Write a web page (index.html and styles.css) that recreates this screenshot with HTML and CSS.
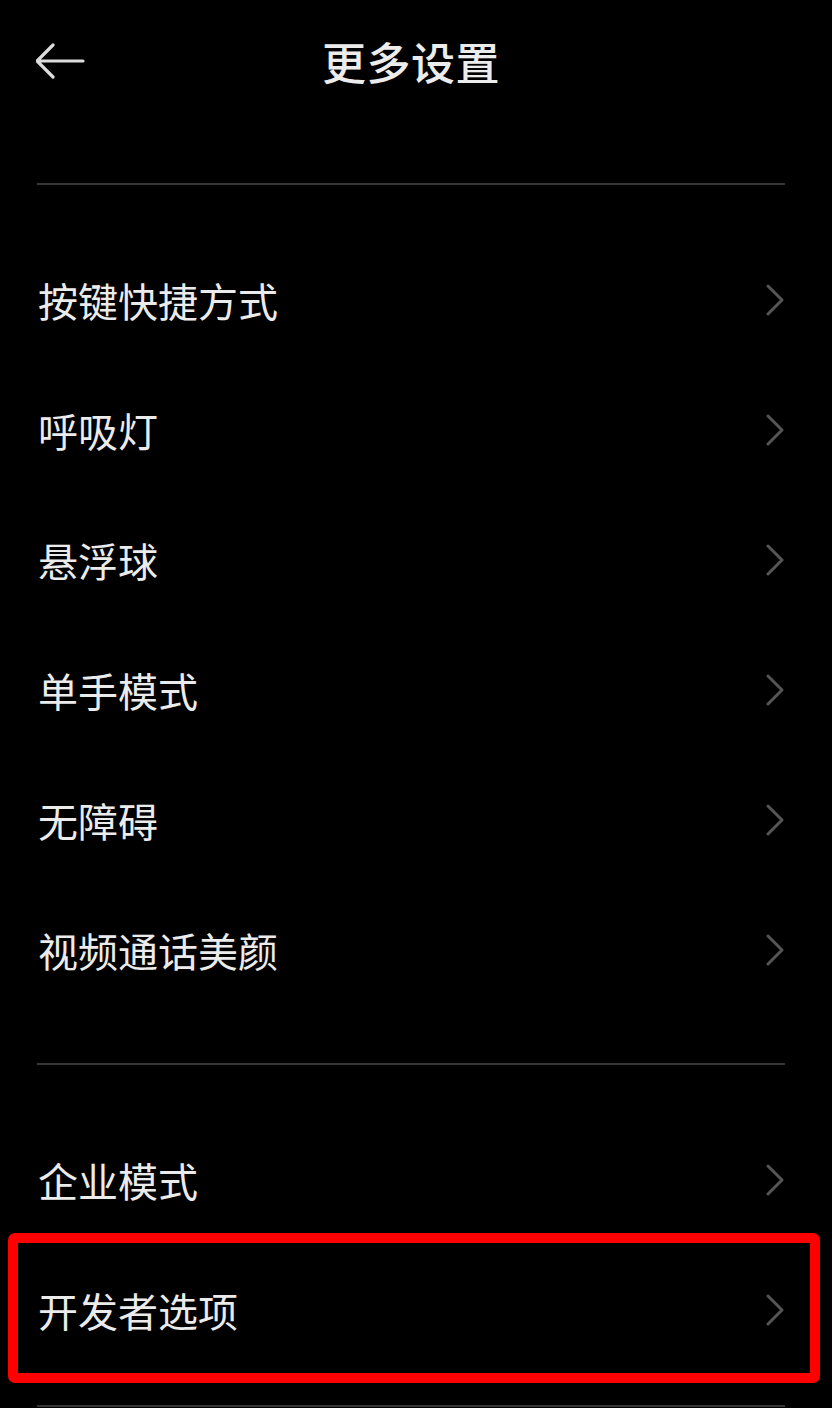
FILE: index.html
```html
<!DOCTYPE html>
<html lang="zh-CN">
<head>
<meta charset="utf-8">
<title>更多设置</title>
<link rel="stylesheet" href="styles.css">
</head>
<body>
<div class="page">
  <header class="header">
    <div class="back">
      <svg width="50" height="36" viewBox="0 0 50 36">
        <path d="M17 2 L1 18 L17 34 M1 18 H47" fill="none" stroke="#dcdcdc" stroke-width="3.2" stroke-linecap="round" stroke-linejoin="round"/>
      </svg>
    </div>
    <h1 class="title">更多设置</h1>
    <div class="spacer"></div>
  </header>
  <div class="divider"></div>
  <ul class="list">
    <li class="row"><span>按键快捷方式</span><svg class="chev" width="20" height="32" viewBox="0 0 20 32"><path d="M2 2 L16 16 L2 30" fill="none" stroke="#555" stroke-width="3" stroke-linecap="round" stroke-linejoin="round"/></svg></li>
    <li class="row"><span>呼吸灯</span><svg class="chev" width="20" height="32" viewBox="0 0 20 32"><path d="M2 2 L16 16 L2 30" fill="none" stroke="#555" stroke-width="3" stroke-linecap="round" stroke-linejoin="round"/></svg></li>
    <li class="row"><span>悬浮球</span><svg class="chev" width="20" height="32" viewBox="0 0 20 32"><path d="M2 2 L16 16 L2 30" fill="none" stroke="#555" stroke-width="3" stroke-linecap="round" stroke-linejoin="round"/></svg></li>
    <li class="row"><span>单手模式</span><svg class="chev" width="20" height="32" viewBox="0 0 20 32"><path d="M2 2 L16 16 L2 30" fill="none" stroke="#555" stroke-width="3" stroke-linecap="round" stroke-linejoin="round"/></svg></li>
    <li class="row"><span>无障碍</span><svg class="chev" width="20" height="32" viewBox="0 0 20 32"><path d="M2 2 L16 16 L2 30" fill="none" stroke="#555" stroke-width="3" stroke-linecap="round" stroke-linejoin="round"/></svg></li>
    <li class="row"><span>视频通话美颜</span><svg class="chev" width="20" height="32" viewBox="0 0 20 32"><path d="M2 2 L16 16 L2 30" fill="none" stroke="#555" stroke-width="3" stroke-linecap="round" stroke-linejoin="round"/></svg></li>
  </ul>
  <div class="divider"></div>
  <ul class="list last">
    <li class="row"><span>企业模式</span><svg class="chev" width="20" height="32" viewBox="0 0 20 32"><path d="M2 2 L16 16 L2 30" fill="none" stroke="#555" stroke-width="3" stroke-linecap="round" stroke-linejoin="round"/></svg></li>
    <li class="row highlighted"><span>开发者选项</span><svg class="chev" width="20" height="32" viewBox="0 0 20 32"><path d="M2 2 L16 16 L2 30" fill="none" stroke="#555" stroke-width="3" stroke-linecap="round" stroke-linejoin="round"/></svg></li>
  </ul>
  <div class="divider"></div>
</div>
</body>
</html>
```

FILE: styles.css
```css
html, body {
  margin: 0;
  padding: 0;
  background: #000;
}
body {
  font-family: "Noto Sans CJK SC", "Noto Sans", sans-serif;
  color: #ebebeb;
}
.page {
  width: 832px;
  height: 1408px;
  overflow: hidden;
  background: #000;
}
.header {
  height: 122px;
  display: grid;
  grid-template-columns: 1fr auto 1fr;
  align-items: center;
  padding: 0 37px;
}
.back {
  display: flex;
  align-items: center;
  height: 36px;
}
.back svg {
  display: block;
  margin-left: -1px;
}
.title {
  margin: 0 0 0 -10px;
  font-size: 44px;
  font-weight: 500;
  line-height: 1;
  color: #ececec;
  letter-spacing: 0.5px;
}
.divider {
  height: 2px;
  margin: 0 47px 0 37px;
  background: #363636;
}
.header + .divider {
  margin-top: 61px;
}
.list {
  list-style: none;
  margin: 0;
  padding: 50px 0 48px;
}
.list.last {
  padding-bottom: 30px;
}
.row {
  position: relative;
  height: 130px;
  display: flex;
  align-items: center;
  justify-content: space-between;
  padding: 0 46px 0 38px;
  font-size: 40px;
  line-height: 1;
}
.chev {
  display: block;
  flex: none;
}
.highlighted::after {
  content: "";
  position: absolute;
  left: 8px;
  right: 12px;
  top: -12px;
  bottom: -8px;
  border: 10px solid #ff0000;
  border-radius: 7px;
}
```
